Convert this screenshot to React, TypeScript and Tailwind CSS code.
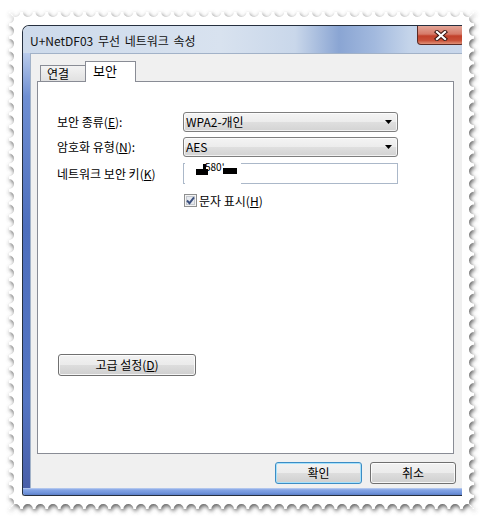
import React from "react";

const font = "font-['Noto_Sans_CJK_KR','Noto_Sans',sans-serif]";

// perforated stamp edge, notches cut in on every side
function stampPath(x0: number, y0: number, x1: number, y1: number, r: number, pitch: number) {
  const nx = Math.round((x1 - x0) / pitch);
  const ny = Math.round((y1 - y0) / pitch);
  const px = (x1 - x0) / nx;
  const py = (y1 - y0) / ny;
  let d = `M${x0},${y0}`;
  for (let i = 0; i < nx; i++) {
    const cx = x0 + px * (i + 0.5);
    d += ` L${cx - r},${y0} A${r},${r} 0 0 0 ${cx + r},${y0}`;
  }
  d += ` L${x1},${y0}`;
  for (let j = 0; j < ny; j++) {
    const cy = y0 + py * (j + 0.5);
    d += ` L${x1},${cy - r} A${r},${r} 0 0 0 ${x1},${cy + r}`;
  }
  d += ` L${x1},${y1}`;
  for (let i = nx - 1; i >= 0; i--) {
    const cx = x0 + px * (i + 0.5);
    d += ` L${cx + r},${y1} A${r},${r} 0 0 0 ${cx - r},${y1}`;
  }
  d += ` L${x0},${y1}`;
  for (let j = ny - 1; j >= 0; j--) {
    const cy = y0 + py * (j + 0.5);
    d += ` L${x0},${cy + r} A${r},${r} 0 0 0 ${x0},${cy - r}`;
  }
  return d + " Z";
}

function Stamp() {
  const d = stampPath(9, 12, 474, 509, 5, 12.7);
  return (
    <svg className="absolute inset-0" width={483} height={519} viewBox="0 0 483 519">
      <defs>
        <filter id="stampShadow" x="-5%" y="-5%" width="110%" height="110%">
          <feGaussianBlur stdDeviation="2.2" />
        </filter>
      </defs>
      <path d={d} fill="#5c5c5c" transform="translate(1 2)" filter="url(#stampShadow)" />
      <path d={d} fill="#ffffff" />
    </svg>
  );
}

function CloseButton() {
  return (
    <div className="-mr-[2px] flex h-[19px] w-[47px] shrink-0 items-center justify-center rounded-b-[4px] border border-t-0 border-[#5a2a24] bg-[linear-gradient(180deg,#e3a597_0%,#d67a68_45%,#c2412b_55%,#c84f37_80%,#e09178_100%)]">
      <svg width="14" height="11" viewBox="0 0 14 11">
        <path d="M3,2 L11,9 M11,2 L3,9" stroke="#3b1712" strokeWidth="4.2" strokeLinecap="square" />
        <path d="M3,2 L11,9 M11,2 L3,9" stroke="#ffffff" strokeWidth="2.2" strokeLinecap="square" />
      </svg>
    </div>
  );
}

function Dropdown({ value }: { value: string }) {
  return (
    <div className="flex h-[20px] w-[215px] items-center justify-between rounded-[3px] border border-[#7e7e7e] bg-[linear-gradient(180deg,#f4f4f4_0%,#ececec_50%,#dfdfdf_51%,#d3d3d3_100%)] pl-[2px] pr-[5px] shadow-[inset_0_0_0_1px_rgba(255,255,255,0.7)]">
      <span className="leading-[16px]">{value}</span>
      <svg width="7" height="4" viewBox="0 0 7 4">
        <polygon points="0,0 7,0 3.5,4" fill="#000" />
      </svg>
    </div>
  );
}

function WinButton({ children, primary }: { children: React.ReactNode; primary?: boolean }) {
  return (
    <div
      className={
        primary
          ? "flex h-[22px] w-[87px] items-center justify-center rounded-[3px] border border-[#3c8cc4] bg-[linear-gradient(180deg,#f2f2f2_0%,#ebebeb_50%,#dddddd_51%,#cfcfcf_100%)] shadow-[inset_0_0_0_1px_#a6e1fb] leading-[16px]"
          : "flex h-[22px] w-[86px] items-center justify-center rounded-[3px] border border-[#707070] bg-[linear-gradient(180deg,#f2f2f2_0%,#ebebeb_50%,#dddddd_51%,#cfcfcf_100%)] shadow-[inset_0_0_0_1px_rgba(255,255,255,0.8)] leading-[16px]"
      }
    >
      {children}
    </div>
  );
}

function Checkbox() {
  return (
    <svg width="13" height="13" viewBox="0 0 13 13">
      <rect x="0.5" y="0.5" width="12" height="12" fill="#f4f4f4" stroke="#8e8f8f" />
      <rect x="2.5" y="2.5" width="8" height="8" fill="#e6e9ee" stroke="#c4c8ce" />
      <path d="M3,6.5 L5.5,9.2 L10,3.4" fill="none" stroke="#3b4f7d" strokeWidth="1.9" />
    </svg>
  );
}

function SecurityTab() {
  return (
    <div className="h-[373px] w-[417px] border border-[#898c95] bg-white pl-[19px] pt-[30px]">
      <div className="flex h-[20px] items-center">
        <span className="w-[126px] leading-[16px]">
          보안 종류(<u>E</u>):
        </span>
        <Dropdown value="WPA2-개인" />
      </div>
      <div className="mt-[5px] flex h-[20px] items-center">
        <span className="w-[126px] leading-[16px]">
          암호화 유형(<u>N</u>):
        </span>
        <Dropdown value="AES" />
      </div>
      <div className="mt-[6px] flex h-[21px] items-center">
        <span className="w-[126px] leading-[16px]">
          네트워크 보안 키(<u>K</u>)
        </span>
        <div className="relative h-[21px] w-[215px] border border-[#abb8c9] bg-white">
          {/* blacked-out key */}
          <div className="absolute -top-[2px] left-[1px] h-[23px] w-[56px] bg-white">
            <div className="absolute left-[11px] top-[7px] h-[6px] w-[12px] bg-black" />
            <div className="absolute left-[18px] top-[2px] h-[6px] w-[3px] bg-black" />
            <span className="absolute left-[20px] top-0 text-[10px] leading-[10px]">580'</span>
            <div className="absolute left-[38px] top-[6px] h-[6px] w-[14px] bg-black" />
          </div>
        </div>
      </div>
      <div className="mt-[10px] flex h-[13px] items-center gap-[2px] pl-[127px]">
        <Checkbox />
        <span className="leading-[16px]">
          문자 표시(<u>H</u>)
        </span>
      </div>
      <div className="ml-[1px] mt-[147px] flex h-[22px] w-[138px] items-center justify-center rounded-[3px] border border-[#707070] bg-[linear-gradient(180deg,#f2f2f2_0%,#ebebeb_50%,#dddddd_51%,#cfcfcf_100%)] shadow-[inset_0_0_0_1px_rgba(255,255,255,0.8)] leading-[16px]">
        고급 설정(<u>D</u>)
      </div>
    </div>
  );
}

function App() {
  return (
    <div className={`relative h-[519px] w-[483px] overflow-hidden bg-white text-[12px] text-black ${font}`}>
      <Stamp />
      <div className="relative pl-[22px] pt-[25px]">
        <div className="flex h-[471px] w-[440px] flex-col overflow-hidden rounded-bl-[3px] rounded-tl-[7px] border-b border-l border-t border-[#26303f]">
          <div className="flex h-[27px] shrink-0 items-start justify-between bg-[linear-gradient(90deg,#cddaeb_0%,#d8e2ef_45%,#c9d7ea_62%,#8aa5d3_72%,#a2b9de_80%,#c4d4ea_88%,#c9d7eb_100%)]">
            <span className="pl-[7px] pt-[7px] leading-[16px] text-[#111] [word-spacing:2px]">U+NetDF03 무선 네트워크 속성</span>
            <CloseButton />
          </div>
          <div className="flex flex-1">
            <div className="w-[7px] bg-[linear-gradient(180deg,#b9cbeb_0%,#6f8fd2_10%,#4e6fbd_40%,#5475c2_80%,#4a5fa8_100%)]" />
            <div className="flex flex-1 flex-col border-l border-t border-[#a2b2c8] bg-[#f0f0f0]">
              <div className="pl-[6px] pt-[7px]">
                <div className="flex h-[20px] items-end pl-[3px]">
                  <div className="h-[16px] w-[45px] border-l border-t border-[#898c95] bg-[linear-gradient(180deg,#f3f3f3,#e1e1e1)] pl-[6px] leading-[15px]">
                    연결
                  </div>
                  <div className="relative z-10 -mb-px h-[21px] w-[51px] border-l border-r border-t border-[#898c95] bg-white pl-[7px] text-[13px] leading-[18px]">
                    보안
                  </div>
                </div>
                <SecurityTab />
              </div>
              <div className="mt-[8px] flex justify-end gap-[8px] pr-[6px]">
                <WinButton primary>확인</WinButton>
                <WinButton>취소</WinButton>
              </div>
            </div>
          </div>
          <div className="h-[7px] shrink-0 bg-[linear-gradient(180deg,#c2d2f0_0%,#86a6e6_25%,#7094dc_70%,#5d7fc8_100%)]" />
        </div>
      </div>
    </div>
  );
}

export default App;
